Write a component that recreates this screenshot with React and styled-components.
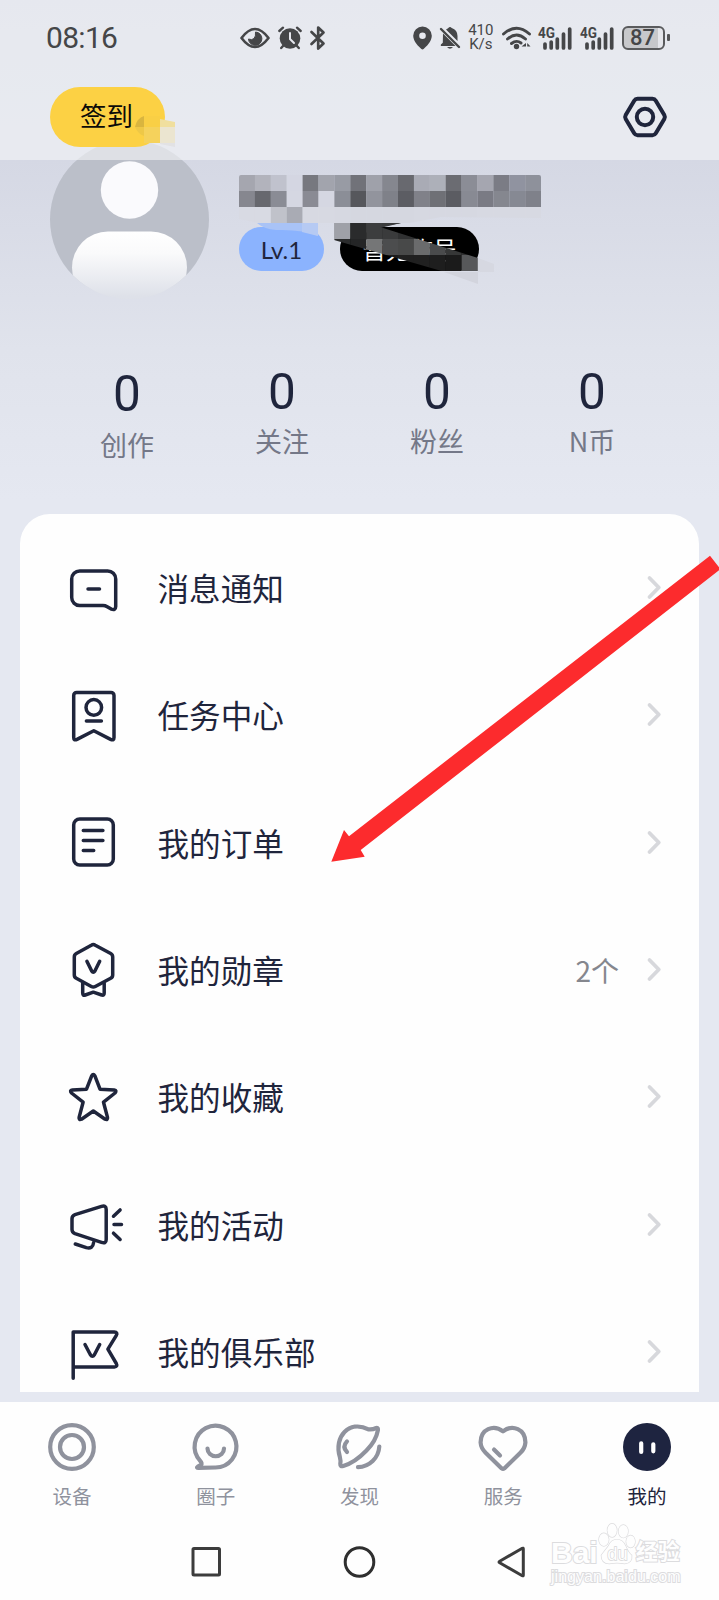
import React from 'react'
import styled, { createGlobalStyle } from 'styled-components'

const INK = '#1f253c'
const GREY = '#8f929d'

const GlobalStyle = createGlobalStyle`
  * { box-sizing: border-box; }
  body {
    margin: 0;
    background: #fefefe;
    font-family: Roboto, "Noto Sans CJK SC", sans-serif;
  }
  svg { display: block; flex: none; overflow: visible; }
`

const Page = styled.div`
  position: relative;
  display: flex;
  flex-direction: column;
  width: 719px;
  height: 1600px;
  overflow: hidden;
  background: linear-gradient(180deg, #d0d3e1 0, #d5d8e4 160px, #e0e3ec 350px, #e5e8f1 500px);
`

const Header = styled.header`
  position: relative;
  z-index: 1;
  height: 160px;
  flex: none;
  background: rgba(245, 246, 248, 0.6);
`

const StatusBar = styled.div`
  display: flex;
  align-items: center;
  height: 75px;
  padding: 0 49px 0 46px;
  color: #454648;
`

const Clock = styled.span`
  width: 194px;
  font-size: 30px;
  letter-spacing: -0.7px;
`

const StatusIcons = styled.div`
  display: flex;
  align-items: center;
  gap: ${p => p.$gap}px;
  margin-left: ${p => (p.$right ? 'auto' : 0)};
`

const Speed = styled.div`
  display: flex;
  flex-direction: column;
  gap: 1px;
  width: 26px;
  font-size: 15px;
  line-height: 13.5px;
  text-align: center;
`

const Battery = styled.div`
  display: flex;
  align-items: center;
  gap: 2px;
  &::after {
    content: '';
    width: 3px;
    height: 7px;
    border-radius: 1px;
    background: #555658;
  }
`

const BatteryBody = styled.span`
  width: 43px;
  height: 24px;
  border: 2px solid #5a5b5d;
  border-radius: 6px;
  background: linear-gradient(90deg, #c7c8cb 87%, #e5e6eb 87%);
  font-size: 22px;
  font-weight: 500;
  line-height: 20px;
  padding-right: 2px;
  text-align: center;
`

const TopRow = styled.div`
  display: flex;
  align-items: center;
  justify-content: space-between;
  height: 84px;
  padding: 0 52px 0 50px;
`

const SignButton = styled.button`
  position: relative;
  width: 115px;
  height: 60px;
  padding: 0 0 0 30px;
  border: 0;
  border-radius: 30px;
  background: #fcd144;
  color: #0c0b08;
  font: 26.5px/60px Roboto, "Noto Sans CJK SC", sans-serif;
  text-align: left;
`

const SignSmudge = styled.svg`
  position: absolute;
  left: 85px;
  top: 29px;
`

const Profile = styled.section`
  position: relative;
  display: flex;
  gap: 30px;
  height: 202px;
  flex: none;
  padding-left: 50px;
`

const Avatar = styled.svg`
  margin-top: -20.5px;
`

const Tags = styled.div`
  display: flex;
  gap: 16px;
  margin-top: 67px;
`

const Tag = styled.span`
  width: ${p => p.$width}px;
  height: 44px;
  border-radius: 22px;
  background: ${p => (p.$dark ? '#000' : '#8bb3fe')};
  color: ${p => (p.$dark ? '#fff' : INK)};
  font: ${p => (p.$dark ? '23.5px/44px "Noto Sans CJK SC"' : '24px/45px Lato')}, sans-serif;
  text-align: center;
`

const Mosaic = styled.svg`
  position: absolute;
  left: 239px;
  top: 15px;
`

const Stats = styled.section`
  display: grid;
  grid-template-columns: repeat(4, 155px);
  height: 152px;
  flex: none;
  padding-left: 49.5px;
  text-align: center;
`

const Stat = styled.div`
  padding-top: ${p => (p.$low ? 3 : 1)}px;
`

const StatValue = styled.div`
  color: ${INK};
  font-size: 49.5px;
  line-height: 58px;
`

const StatLabel = styled.div`
  margin-top: ${p => (p.$low ? 2 : 0)}px;
  color: #747888;
  font: 27px/40px "Noto Sans CJK SC", sans-serif;
`

const Card = styled.main`
  height: 877.5px;
  flex: none;
  margin: 0 20px 10px;
  padding: 10.5px 38px 0 44px;
  border-radius: 30px 30px 0 0;
  background: #fefefe;
  overflow: hidden;
`

const Row = styled.div`
  display: flex;
  align-items: center;
  height: 127.3px;
`

const RowLabel = styled.span`
  flex: 1;
  padding: 0 0 2px 33.5px;
  color: ${INK};
  font: 31.6px/44px "Noto Sans CJK SC", sans-serif;
`

const RowNote = styled.span`
  margin-right: 28px;
  padding-bottom: 1px;
  color: #85878e;
  font: 28px/40px "Noto Sans CJK SC", sans-serif;
`

const TabBar = styled.nav`
  display: grid;
  grid-template-columns: repeat(5, 1fr);
  height: 121px;
  flex: none;
  padding-top: 21.5px;
  background: #fefefe;
`

const Tab = styled.div`
  display: flex;
  flex-direction: column;
  align-items: center;
  gap: 11px;
  color: ${p => (p.$active ? INK : GREY)};
  font: 19.5px/28px "Noto Sans CJK SC", sans-serif;
`

const SystemBar = styled.div`
  display: flex;
  align-items: center;
  height: 78px;
  flex: none;
  padding-left: 190px;
  gap: 120px;
  background: #fefefe;
`

const Watermark = styled.div`
  position: absolute;
  left: 551px;
  top: 1522px;
  width: 132px;
  color: #fefefe;
  -webkit-text-stroke: 2px #dcdcde;
  paint-order: stroke fill;
`

const WatermarkLogo = styled.div`
  display: flex;
  align-items: flex-end;
  height: 44px;
  font: bold 30px/27px "Liberation Sans", "Noto Sans CJK SC", sans-serif;
`

const WatermarkCn = styled.span`
  margin-left: 1px;
  font-size: 22px;
  line-height: 29px;
`

const WatermarkUrl = styled.div`
  font: 16.1px/20px "Liberation Sans", sans-serif;
  white-space: nowrap;
`

const Arrow = styled.svg`
  position: absolute;
  left: 0;
  top: 0;
  pointer-events: none;
`

const Line = ({ size = 60, width = 3.5, color = INK, children }) => (
  <svg width={size} height={size} viewBox={`0 0 ${size} ${size}`} fill="none" stroke={color}
    strokeWidth={width} strokeLinecap="round" strokeLinejoin="round">
    {children}
  </svg>
)

const MENU = [
  {
    label: '消息通知',
    icon: <><path d="M15.7 13h28a8 8 0 0 1 8 8v27.5q0 4-4.5 2.6l-4-2.4q-2-1.2-4.2-1.2H15.7a8 8 0 0 1-8-8V21a8 8 0 0 1 8-8Z" /><path d="M24 31h11.5" /></>,
  },
  {
    label: '任务中心',
    icon: <><path d="M12.7 7.4H47a3 3 0 0 1 3 3v42q0 3.5-3.4 2L29.8 45.7 13 54.4q-3.3 1.5-3.3-2v-42a3 3 0 0 1 3-3Z" /><circle cx="29.8" cy="22.4" r="7.8" /><path d="M22.4 36h15" /></>,
  },
  {
    label: '我的订单',
    icon: <><rect x="9.7" y="5.9" width="39.6" height="46" rx="6" /><path d="M19.3 17.6h19.6M19.3 27.6h19.6M19.3 37.6h10.4" /></>,
  },
  {
    label: '我的勋章',
    note: '2个',
    icon: <><path d="M27.3 5.2q2-1.2 4 0l15.4 8.3q2 1.1 2 3.4v18q0 2.3-2 3.4l-15.4 8.2q-2 1.1-4 0l-15-8.2q-2-1.1-2-3.4v-18q0-2.3 2-3.4Z" /><path d="m22.9 21.3 4.8 9.7q1.6 2.6 3.2 0l4.8-9.7M18.7 43.3V53q0 3 2.6 2l8-2.8 8.4 2.8q2.5 1 2.5-2v-9.7" /></>,
  },
  {
    label: '我的收藏',
    icon: <path d="M27.7 8.8q1.6-2.8 3.2 0l5.1 13.4 14.2.8q3 .5.8 3L39.5 35.2l4 15.2q.4 3-2.4 1.8L29.3 44l-11.8 8.2q-2.8 1.2-2.4-1.8l4-15.2L7.5 26q-2.2-2.5.8-3l14.2-.8Z" />,
  },
  {
    label: '我的活动',
    icon: <><path d="M11 19.6 37.5 11.4q4.7-1.4 4.7 3v30q0 4.500-4.700 3L11 38.600q-3-1.200-3-4V23.700q0-3 3-4.100Z" /><path d="m11.300 49 11 3.600q6.500 1.700 7.300-5M49.500 21.200l6.600-6.300M50 29.600h7.500M49.500 38.200l6.600 6.300" /></>,
  },
  {
    label: '我的俱乐部',
    icon: <><path d="M9.200 56.300V10h41q4 .3 2 3.600l-8.300 13.600 8.400 14.300q1.700 3.200-2 3.500h-41" /><path d="m21 22.500 5.400 10.300q2 3 4 0l5.300-10.300" /></>,
  },
]

const TABS = [
  { label: '设备', icon: <><circle cx="24" cy="24" r="21.8" /><circle cx="24" cy="24" r="12" /></> },
  {
    label: '圈子',
    icon: <><path d="M23.5 44.5A20.9 20.9 0 1 0 8 37.6q2.6 3 1 4.3l-3.2 1.7q-1.7 1.2.8 1.3Z" /><path d="M15.5 25.5a8 7.5 0 0 0 16.500 0" /></>,
  },
  {
    label: '发现',
    icon: <><path d="M33.5 6.3q4.5.3 6.800-1 3-1.300 2.700 1.600Q41 18 31.500 27.500 20 39.500 8.300 43q-3.200.8-3-2 .6-3.200-.4-6.800C-1.500 14 14-3.500 33.500 6.300Z" /><path d="M12 18.400q-5.200 5.400 0 10.600M44.300 23.500A22 22 0 0 1 23 44.200" /></>,
  },
  {
    label: '服务',
    icon: <><path d="M24 8.300C33.500 1 46.500 6 46.400 19.500q-.4 5.800-5 10.300L25.300 45.400q-1.300 1-2.600 0L6.600 29.800Q1.900 25 1.600 19.500C1.500 6 14.500 1 24 8.300Z" /><path d="m15 26.600 6 5.900" /></>,
  },
  {
    label: '我的',
    active: true,
    icon: <><circle cx="24" cy="24" r="24" fill="#1e2440" stroke="none" /><path d="M18.200 20.300v8.600M30.300 21.300v7" stroke="#fff" /></>,
  },
]

const CELL = 15.9
const CELLS = [
  'a5a6af b2b3bc c0c2cd d4d6e2 77787f a2a4ad 989ba4 717279 9fa1aa 85878f 68696f a9abb5 adb0b9 6b6c72 8b8d96 a5a6b0 7b7c85 9093a0 8e919b',
  '86878f 67686e 8a8c95 d5d7e2 8a8b94 d5d7e2 8b8e97 56575c 92949d 7f8189 5c5d63 808189 6f7076 5b5c62 888a93 7a7b84 85878f 868993 7f818a',
  'd8dae3 d8dae3 c0c2ca a9abb4 d7d9e2 d7d9e2 d6d8e1 d5d7e0 d5d7e0 d5d7e0 d5d7e0 d6d8e1 d6d8e1 d6d8e1 d6d8e1 d7d9e2 d7d9e2 d7d9e2 d7d9e2',
].map(row => row.split(' '))

const STRIPE = [
  '- - - - - - 9fa1a8 2a2b2c 3c3d3e 3a3b3c 303132 303132 303132 303132 303132 303132',
  '- - - - - - 2a2b2c 242526 757677 4c4d4e 484949 6a6b6c 4a4b4c 363737 303031 303031',
  '- - - - - - - 101010 161616 1c1c1c 202020 202020 1e1e1e 1b1b1b 57585a 57585a',
].map(row => row.split(' '))

function cells(rows, top, height = 16) {
  return rows.map((row, y) => row.map((c, x) => c !== '-' && (
    <rect key={`${x}-${y}`} x={x * CELL} y={top + y * height} width={CELL + 0.1} height={height} fill={`#${c}`} />
  )))
}

function NameMosaic() {
  return (
    <Mosaic width="330" height="115" viewBox="0 0 330 115">
      <clipPath id="name"><path d="M2 0h298q2 0 2 2v41L202 42 160 50 20 48 0 44V2q0-2 2-2Z" /></clipPath>
      <clipPath id="stripe"><path d="M95 48h67l-21 4 98 31v14h-33L95 65Z" /></clipPath>
      <g clipPath="url(#name)">{cells(CELLS, 0)}</g>
      <path d="M18 48h61v13q-16-7-42-6-12-1-19-7Z" fill="#a9c3f6" />
      <path d="M63 48h16v13l-16-4Z" fill="#b6caf3" />
      <path d="M95 48h16v17l-16-1Z" fill="#a7a9b1" />
      <path d="M111 48h51l-21 5-30 10Z" fill="#3b3c3f" />
      <g clipPath="url(#stripe)">{cells(STRIPE, 48)}</g>
      <path d="M205 97h34v12Z" fill="#d2d4dd" />
      <path d="M239 83l16 6v8h-16Z" fill="#d6d8e1" />
    </Mosaic>
  )
}

const Signal = () => (
  <svg width="34" height="24" viewBox="0 0 34 24" fill="currentColor">
    <text x="0" y="12" fontSize="14" fontWeight="700" textLength="17" lengthAdjust="spacingAndGlyphs">4G</text>
    <path d="M7 18v4M13.200 16v6M19.300 13v9M25.500 8v14M31.700 3v19" stroke="currentColor" strokeWidth="3.700" strokeLinecap="round" />
  </svg>
)

function Status() {
  return (
    <StatusBar>
      <Clock>08:16</Clock>
      <StatusIcons $gap={8}>
        <svg width="30" height="22" viewBox="0 0 30 22" fill="none" stroke="currentColor" strokeWidth="2.6">
          <path d="M1.500 11Q15-7 28.500 11 15 29 1.500 11Z" strokeLinejoin="round" />
          <path d="M15.500 5a6.700 6.700 0 1 1-7 7q3.500 1.500 5.500-.5T15.500 5Z" fill="currentColor" strokeWidth="1" />
        </svg>
        <svg width="24" height="24" viewBox="0 0 24 24" fill="none" stroke="currentColor" strokeWidth="2.4" strokeLinecap="round">
          <circle cx="12" cy="12.5" r="10.3" fill="currentColor" stroke="none" />
          <path d="M1.300 5 5 1.700M22.700 5 19 1.700M5 20l-1.800 2M19 20l1.800 2" />
          <path d="M12 7v6l4 4" stroke="#e6e7ee" strokeWidth="2" />
        </svg>
        <svg width="15" height="24" viewBox="0 0 15 24" fill="none" stroke="currentColor" strokeWidth="2.7" strokeLinecap="round" strokeLinejoin="round">
          <path d="m1.500 6 12 11.500-5.300 5V1.500l5.300 5L1.500 18" />
        </svg>
      </StatusIcons>
      <StatusIcons $gap={7.8} $right>
        <svg width="19" height="24" viewBox="0 0 19 24" fill="currentColor">
          <path fillRule="evenodd" d="M9.500.5A9.300 9.300 0 0 1 18.800 9.800C18.800 15.500 13 21 10.600 23q-1.100.8-2.200 0C6 21 .2 15.500.2 9.800A9.300 9.300 0 0 1 9.500.5Zm0 6a3.300 3.300 0 1 0 0 6.600 3.300 3.300 0 0 0 0-6.600Z" />
        </svg>
        <svg width="20" height="24" viewBox="0 0 20 24" fill="currentColor">
          <path d="M3 7.500 15.500 20H.8q-.8-1.500 2-3.300ZM6 3.500Q7.500 2.500 8.300 2q1.700-2 3.400 0Q17.500 4 17.500 10v5ZM7 21h6q-3 3.500-6 0Z" />
          <path d="m1 3 18 18" stroke="currentColor" strokeWidth="2.4" strokeLinecap="round" />
        </svg>
        <Speed>
          <span>410</span>
          <span>K/s</span>
        </Speed>
        <svg width="29" height="24" viewBox="0 0 29 24" fill="none" stroke="currentColor" strokeWidth="2.9" strokeLinecap="round">
          <path d="M1.500 8Q14.500-3.500 27.500 8M5.500 13q9-8 18 0M9.500 17.500q5-4 9.500-.5" />
          <circle cx="14.5" cy="20.5" r="2.7" fill="currentColor" stroke="none" />
          <path d="m24 17-4.500 3.500H24ZM25.200 23v-6l3.300 3.500h-3.300Z" fill="currentColor" stroke="none" />
        </svg>
        <Signal />
        <Signal />
        <Battery><BatteryBody>87</BatteryBody></Battery>
      </StatusIcons>
    </StatusBar>
  )
}

function App() {
  return (
    <>
      <GlobalStyle />
      <Page>
        <Header>
          <Status />
          <TopRow>
            <SignButton>
              签到
              <SignSmudge width="42" height="32" viewBox="0 0 42 32">
                <path d="M0 11Q2 2 9 0v11Z" fill="#d9b53f" />
                <path d="M0 11h9v9Q3 18 0 11Z" fill="#eec847" />
                <path d="M9 0h16v11H9Z" fill="#f9cf45" />
                <path d="M9 11h16v16H9Z" fill="#f5d25c" />
                <path d="M25 3l15 3v5H25Z" fill="#f0df9e" />
                <path d="M25 11h15v16H25Z" fill="#ebe5d0" />
                <path d="M25 27h15v4l-15-3Z" fill="#e2e2e4" />
              </SignSmudge>
            </SignButton>
            <Line size={44} width={4}>
              <path d="M14.500 3.800h15q2.200 0 3.300 1.900l8.500 14.400q1.100 1.900 0 3.800l-8.500 14.400q-1.100 1.900-3.300 1.900h-15q-2.200 0-3.300-1.900L2.700 23.900q-1.100-1.900 0-3.800l8.500-14.400q1.100-1.900 3.300-1.900Z" />
              <circle cx="22" cy="22" r="8.2" />
            </Line>
          </TopRow>
        </Header>

        <Profile>
          <Avatar width="159" height="159" viewBox="0 0 159 159">
            <defs>
              <linearGradient id="body" x1="0" y1="0" x2="0" y2="1">
                <stop offset="0" stopColor="#fff" />
                <stop offset="0.3" stopColor="#fafafb" />
                <stop offset="0.9" stopColor="#dee1e9" />
              </linearGradient>
              <linearGradient id="disc" x1="0" y1="0" x2="0" y2="1">
                <stop offset="0.85" stopColor="#bbbfc9" />
                <stop offset="0.95" stopColor="#dcdfe7" />
              </linearGradient>
              <clipPath id="round"><circle cx="79.5" cy="79.5" r="79.5" /></clipPath>
            </defs>
            <g clipPath="url(#round)">
              <rect width="159" height="159" fill="url(#disc)" />
              <circle cx="79.5" cy="50" r="28.7" fill="#fafafd" />
              <rect x="22" y="91.5" width="115" height="72" rx="36" fill="url(#body)" />
            </g>
          </Avatar>
          <Tags>
            <Tag $width={85}>Lv.1</Tag>
            <Tag $width={139} $dark>暂无称号</Tag>
          </Tags>
          <NameMosaic />
        </Profile>

        <Stats>
          {['创作', '关注', '粉丝', 'N币'].map((label, i) => (
            <Stat key={label} $low={i === 0}>
              <StatValue>0</StatValue>
              <StatLabel $low={i === 0}>{label}</StatLabel>
            </Stat>
          ))}
        </Stats>

        <Card>
          {MENU.map(({ label, icon, note }) => (
            <Row key={label}>
              <Line>{icon}</Line>
              <RowLabel>{label}</RowLabel>
              {note && <RowNote>{note}</RowNote>}
              <svg width="14" height="24" viewBox="0 0 14 24" fill="none" stroke="#d7d8dc" strokeWidth="3.8" strokeLinecap="round" strokeLinejoin="round">
                <path d="m2.500 2 9.300 9.500L2.500 21" />
              </svg>
            </Row>
          ))}
        </Card>

        <TabBar>
          {TABS.map(({ label, icon, active }) => (
            <Tab key={label} $active={active}>
              <Line size={48} width={4.2} color={GREY}>{icon}</Line>
              {label}
            </Tab>
          ))}
        </TabBar>

        <SystemBar>
          <Line size={32} width={3} color="#3c3c3c"><rect x="3" y="2.5" width="26.5" height="26.5" rx="1" /></Line>
          <Line size={32} width={3} color="#2f2f2f"><circle cx="17.5" cy="16" r="14.3" /></Line>
          <Line size={32} width={3} color="#3c3c3c"><path d="M29.300 2.800v26.400q0 1-1 .5L5.700 16.800q-1.400-.8 0-1.600L28.300 2.300q1-.5 1 .5Z" /></Line>
        </SystemBar>

        <Watermark>
          <WatermarkLogo>
            Bai
            <svg width="37" height="44" viewBox="0 0 38 45" fill="#fefefe" stroke="#dcdcde" strokeWidth="1.4">
              <ellipse cx="6" cy="18" rx="5" ry="6.5" />
              <ellipse cx="14.5" cy="8.5" rx="4.8" ry="6.8" />
              <ellipse cx="26" cy="9.5" rx="4.8" ry="6.5" />
              <ellipse cx="33.5" cy="20" rx="4.5" ry="6.2" />
              <path d="M19.500 18q6 0 9 7t6 9q1 8-7 8.500-8-1.500-16 0-8 0-8-8.500l7-9q3-7 9-7Z" />
              <text x="9.5" y="38.5" fontSize="19" fontWeight="400" stroke="#d6d6d8">du</text>
            </svg>
            <WatermarkCn>经验</WatermarkCn>
          </WatermarkLogo>
          <WatermarkUrl>jingyan.baidu.com</WatermarkUrl>
        </Watermark>

        <Arrow width="719" height="1600" viewBox="0 0 719 1600">
          <path d="M331.300 861.700 344 830l5 6.300L710 555.700l9 11.500v3L360.700 850l4 6.700Z" fill="#fc2b2d" />
        </Arrow>
      </Page>
    </>
  )
}

export default App
